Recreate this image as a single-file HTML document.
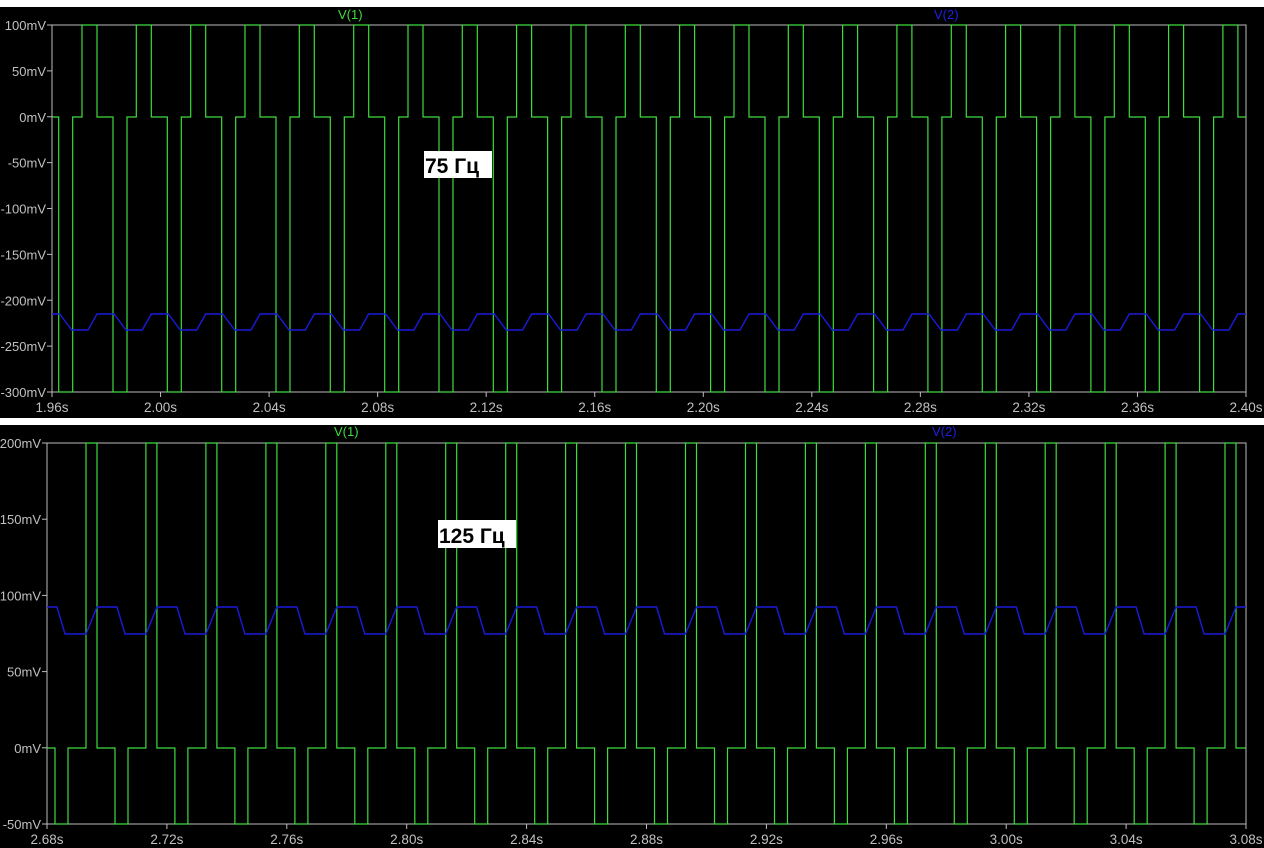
<!DOCTYPE html>
<html><head><meta charset="utf-8"><style>
html,body{margin:0;padding:0;background:#000;width:1264px;height:848px;overflow:hidden}
svg{display:block}
text{font-family:"Liberation Sans",sans-serif;font-size:13px}
</style></head><body>
<svg id="s" width="1264" height="848" xmlns="http://www.w3.org/2000/svg">
<rect x="0" y="0" width="1264" height="848" fill="#000"/>
<rect x="0" y="0" width="1264" height="7" fill="#fff"/>
<rect x="0" y="418" width="1264" height="7" fill="#fff"/>
<g id="g"></g>
<rect x="424" y="151" width="68" height="27" fill="#fff"/>
<text x="425" y="173" style="font-size:21px;font-weight:bold" fill="#000">75 Гц</text>
<rect x="438" y="520" width="78" height="28" fill="#fff"/>
<text x="439" y="543" style="font-size:21px;font-weight:bold" fill="#000">125 Гц</text>
</svg>
<script>
var g=document.getElementById('g'),h='';
function axes(x0,x1,y0,y1,yl,xl){
 h+='<rect x="'+x0+'" y="'+y0+'" width="'+(x1-x0)+'" height="'+(y1-y0)+'" fill="none" stroke="#bdbdbd" stroke-width="1"/>';
 for(var i=0;i<yl.length;i++){var y=y0+(y1-y0)*i/(yl.length-1);
  h+='<line x1="'+(x0-5)+'" y1="'+y+'" x2="'+x0+'" y2="'+y+'" stroke="#bdbdbd"/>';
  h+='<text x="'+(x0-6)+'" y="'+(y+5)+'" text-anchor="end" fill="#c0c0c0">'+yl[i]+'</text>';}
 for(var i=0;i<xl.length;i++){var x=x0+(x1-x0)*i/(xl.length-1);
  h+='<line x1="'+x+'" y1="'+y1+'" x2="'+x+'" y2="'+(y1+5)+'" stroke="#bdbdbd"/>';
  h+='<text x="'+x+'" y="'+(y1+20)+'" text-anchor="middle" fill="#c0c0c0" style="font-size:13.5px">'+xl[i]+'</text>';}
}
function green(x0,x1,yT,yZ,yB,first,P,pw,doff,dw){
 var d='';var u=first-P*Math.ceil((first-x0)/P);
 var segs=[];
 for(var k=-1;k<40;k++){var a=u+k*P;
  segs.push([a,yT],[a+pw,yZ],[a+doff,yB],[a+doff+dw,yZ]);}
 d='M'+x0+' '+yZ;var cur=yZ;
 for(var i=0;i<segs.length;i++){var x=segs[i][0];if(x<x0)continue;if(x>x1)break;
  var ny=segs[i][1];
  d+=' L'+x.toFixed(1)+' '+cur+' L'+x.toFixed(1)+' '+ny;cur=ny;}
 d+=' L'+x1+' '+cur;
 h+='<path d="'+d+'" fill="none" stroke="#3fdc3f" stroke-width="1.2"/>';
}
function blue(x0,x1,yH,yL,first,P,r0,r1,f0,f1){
 var d='';var u=first-P*Math.ceil((first-x0)/P+1);var started=false;
 for(var k=0;k<40;k++){var a=u+k*P;
  var p=[[a+r0,yL],[a+r1,yH],[a+f0,yH],[a+f1,yL]];
  for(var j=0;j<4;j++){d+=(started?' L':'M')+p[j][0].toFixed(1)+' '+p[j][1];started=true;}
  if(a>x1)break;}
 h+='<clipPath id="c'+x0+'"><rect x="'+x0+'" y="0" width="'+(x1-x0)+'" height="848"/></clipPath>';
 h+='<path clip-path="url(#c'+x0+')" d="'+d+'" fill="none" stroke="#1a1adc" stroke-width="1.4"/>';
}
axes(52,1246,25,392,['100mV','50mV','0mV','-50mV','-100mV','-150mV','-200mV','-250mV','-300mV'],['1.96s','2.00s','2.04s','2.08s','2.12s','2.16s','2.20s','2.24s','2.28s','2.32s','2.36s','2.40s']);
axes(47,1246,443,824,['200mV','150mV','100mV','50mV','0mV','-50mV'],['2.68s','2.72s','2.76s','2.80s','2.84s','2.88s','2.92s','2.96s','3.00s','3.04s','3.08s']);
green(52,1246,25,117,392,82,54.33,15,31,14);
green(47,1246,443,748,824,86,59.95,11,29,13);
blue(52,1246,314,330,82,54.33,6,15,32,44);
blue(47,1246,607,634,86,59.95,0,11,31,39);
h+='<text x="338" y="19" fill="#3fdc3f">V(1)</text><text x="934" y="19" fill="#2020e0">V(2)</text>';
h+='<text x="334" y="436" fill="#3fdc3f">V(1)</text><text x="932" y="436" fill="#2020e0">V(2)</text>';
g.innerHTML=h;
</script>
</body></html>
